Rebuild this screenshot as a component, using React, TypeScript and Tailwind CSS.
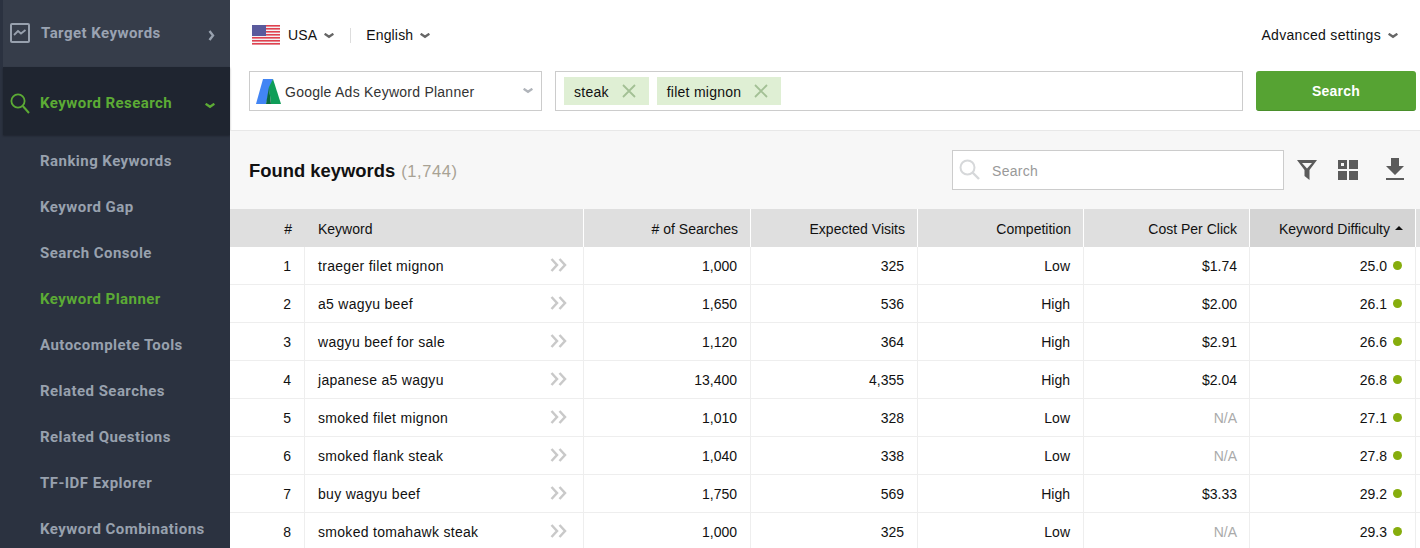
const subItems = [
  "Ranking Keywords",
  "Keyword Gap",
  "Search Console",
  "Keyword Planner",
  "Autocomplete Tools",
  "Related Searches",
  "Related Questions",
  "TF-IDF Explorer",
  "Keyword Combinations",
];

const rows = [
  ["1", "traeger filet mignon", "1,000", "325", "Low", "$1.74", "25.0"],
  ["2", "a5 wagyu beef", "1,650", "536", "High", "$2.00", "26.1"],
  ["3", "wagyu beef for sale", "1,120", "364", "High", "$2.91", "26.6"],
  ["4", "japanese a5 wagyu", "13,400", "4,355", "High", "$2.04", "26.8"],
  ["5", "smoked filet mignon", "1,010", "328", "Low", "N/A", "27.1"],
  ["6", "smoked flank steak", "1,040", "338", "Low", "N/A", "27.8"],
  ["7", "buy wagyu beef", "1,750", "569", "High", "$3.33", "29.2"],
  ["8", "smoked tomahawk steak", "1,000", "325", "Low", "N/A", "29.3"],
];

const cols = "grid grid-cols-[74px_279px_167px_167px_166px_166px_166px_5px]";

function Caret({ className }: { className?: string }) {
  return (
    <svg width="10" height="6" viewBox="0 0 10 6" className={className}>
      <path d="M0.6 0.8 L5 3.8 L9.4 0.8" fill="none" stroke="currentColor" strokeWidth="2.4" />
    </svg>
  );
}

function Flag() {
  return (
    <svg width="28" height="20" viewBox="0 0 28 20" className="mb-[2px]">
      <rect width="28" height="20" fill="#f3f1f4" />
      {[0, 3, 6, 9, 12, 15, 18].map((y) => (
        <rect key={y} y={y} width="28" height="1.6" fill="#e0414f" />
      ))}
      <rect width="14" height="11" fill="#5a5a9c" />
    </svg>
  );
}

function AdsLogo() {
  return (
    <svg width="25" height="25" viewBox="0 0 25 25">
      <path d="M7 0 H17 L10 25 H0 Z" fill="#4285f4" />
      <path d="M13 8 L17 0 L25 25 H15 Z" fill="#0f9d58" />
      <path d="M13 8 L15 25 H10 Z" fill="#0b6b3d" />
    </svg>
  );
}

function Tag({ label }: { label: string }) {
  return (
    <div className="flex h-7 items-center bg-[#dfefd4] pl-[10px] pr-[13px] text-[14px] tracking-[0.25px] text-[#111]">
      <span className="pt-[2px]">{label}</span>
      <svg width="14" height="14" viewBox="0 0 14 14" className="ml-[13px]">
        <path d="M1 1 L13 13 M13 1 L1 13" stroke="#a3c095" strokeWidth="1.8" />
      </svg>
    </div>
  );
}

export default function App() {
  return (
    <div className="flex h-[548px] w-[1420px] overflow-hidden bg-white font-['Liberation_Sans',Arial,sans-serif] text-[14px] text-[#111]">
      <aside className="w-[230px] shrink-0 bg-[#2b3240] pl-[3px] font-['Roboto',sans-serif] text-[15px] font-bold tracking-[0.45px]">
        <div className="flex h-[67px] items-center bg-[#363d4a] pl-[7px] pr-[15px] text-[#9aa3b2]">
          <svg width="20" height="20" viewBox="0 0 20 20" className="mb-[2px]">
            <rect x="1" y="1" width="18" height="18" rx="1" fill="none" stroke="#98a1ae" strokeWidth="2" />
            <path d="M4 12 L8 8 L11 10.5 L15.5 7" fill="none" stroke="#98a1ae" strokeWidth="1.8" />
          </svg>
          <span className="ml-[11px] flex-1">Target Keywords</span>
          <svg width="7" height="11" viewBox="0 0 7 11" className="mt-[3px]">
            <path d="M1.5 1 L5 5.5 L1.5 10" fill="none" stroke="#98a1ae" strokeWidth="2.4" />
          </svg>
        </div>
        <div className="flex h-[68px] items-center bg-[#1f2530] pl-[7px] pr-[15px] pt-[4px] text-[#5cab35] shadow-[0_1px_2px_rgba(0,0,0,0.3)]">
          <svg width="20" height="21" viewBox="0 0 20 21">
            <circle cx="8" cy="8" r="6.6" fill="none" stroke="#5cab35" strokeWidth="1.8" />
            <path d="M12.8 13 L19 20" stroke="#5cab35" strokeWidth="2" />
          </svg>
          <span className="ml-[10px] flex-1">Keyword Research</span>
          <Caret className="mt-[5px]" />
        </div>
        <nav className="flex flex-col pl-[37px] pt-[3px]">
          {subItems.map((item) => (
            <a key={item} className={item === "Keyword Planner" ? "flex h-[46px] items-center text-[#5cab35]" : "flex h-[46px] items-center text-[#98a1ae]"}>
              {item}
            </a>
          ))}
        </nav>
      </aside>

      <main className="flex min-w-0 flex-1 flex-col">
        <div className="h-[131px] shrink-0 border-b border-[#e8e8e8] pl-[19px] pr-1">
          <div className="flex h-[71px] items-center pl-[3px] pr-[18px] tracking-[0.15px]">
            <Flag />
            <span className="ml-2">USA</span>
            <Caret className="ml-[7px] text-[#666]" />
            <div className="ml-4 h-[15px] w-px bg-[#ddd]" />
            <span className="ml-[15px]">English</span>
            <Caret className="ml-[7px] text-[#666]" />
            <span className="ml-auto tracking-[0.3px]">Advanced settings</span>
            <Caret className="ml-[7px] text-[#666]" />
          </div>
          <div className="flex h-10 items-stretch">
            <div className="flex w-[293px] items-center border border-[#ccc] pl-[6px] pr-[8px] text-[#333]">
              <AdsLogo />
              <span className="ml-1 flex-1 pt-[2px] tracking-[0.25px]">Google Ads Keyword Planner</span>
              <Caret className="text-[#b0b4ba]" />
            </div>
            <div className="ml-[13px] flex w-[688px] items-center gap-2 border border-[#ccc] pl-2">
              <Tag label="steak" />
              <Tag label="filet mignon" />
            </div>
            <button className="ml-[13px] w-40 rounded-[3px] border-b border-[#4a8f2b] bg-[#56a333] pt-[2px] text-[14px] font-bold tracking-[0.2px] text-white">
              Search
            </button>
          </div>
        </div>

        <div className="flex h-[78px] shrink-0 items-center bg-[#f7f7f7] pl-[19px] pr-[15px]">
          <h2 className="pt-[2px] text-[18.4px] font-bold text-[#111]">
            Found keywords <span className="ml-[1px] text-[16.5px] font-normal tracking-[0.6px] text-[#a8a294]">(1,744)</span>
          </h2>
          <div className="ml-auto flex h-10 w-[332px] items-center border border-[#ccc] bg-white pl-[6px] text-[#999]">
            <svg width="21" height="21" viewBox="0 0 21 21" className="mb-[2px]">
              <circle cx="8.5" cy="8.5" r="7" fill="none" stroke="#d6d8da" strokeWidth="2" />
              <path d="M13.5 13.5 L20 20" stroke="#d6d8da" strokeWidth="2.4" />
            </svg>
            <span className="ml-[12px] pt-[2px] tracking-[0.3px]">Search</span>
          </div>
          <svg width="20" height="20" viewBox="0 0 20 20" className="ml-[13px]">
            <path fillRule="evenodd" d="M0 0 H20 L12.5 10 V20 L7.5 16 V10 Z M5 3 H15 L10 8.5 Z" fill="#5b5b5b" />
          </svg>
          <svg width="20" height="20" viewBox="0 0 20 20" className="ml-[21px]">
            <path fillRule="evenodd" d="M0 0 H9 V9 H0 Z M3 3 V6 H6 V3 Z M11 0 H20 V9 H11 Z M0 11 H9 V20 H0 Z M11 11 H20 V20 H11 Z" fill="#5b5b5b" />
          </svg>
          <svg width="20" height="24" viewBox="0 0 20 24" className="ml-[27px]">
            <path d="M6 0 H14 V8 H19 L10 17 L1 8 H6 Z M1 20 H19 V22 H1 Z" fill="#5b5b5b" />
          </svg>
        </div>

        <div className={`${cols} h-[38px] shrink-0 bg-[#dfdfdf] pt-[2px]`}>
          <div className="flex items-center justify-end pr-[12px]">#</div>
          <div className="flex items-center pl-[14px]">Keyword</div>
          {["# of Searches", "Expected Visits", "Competition", "Cost Per Click"].map((h) => (
            <div key={h} className="-mt-[2px] flex items-center justify-end border-l border-white pr-3 pt-[2px]">{h}</div>
          ))}
          <div className="-mt-[2px] flex items-center justify-end border-l border-white bg-[#d4d4d4] pr-[12px] pt-[2px]">
            Keyword Difficulty
            <span className="ml-[5px] mb-[2px] h-0 w-0 border-x-[4px] border-b-[4px] border-x-transparent border-b-[#111]" />
          </div>
          <div className="-mt-[2px] border-l border-white" />
        </div>

        {rows.map((r) => (
          <div key={r[0]} className={`${cols} h-[38px] shrink-0 border-b border-[#eee]`}>
            <div className="flex items-center justify-end pr-[13px] pt-[2px]">{r[0]}</div>
            <div className="flex items-center border-l border-[#eee] pl-[13px] pr-[16px] pt-[2px]">
              <span className="flex-1 tracking-[0.3px]">{r[1]}</span>
              <svg width="17" height="14" viewBox="0 0 17 14" className="mb-[4px]">
                <path d="M1.5 1 L7 7 L1.5 13 M9.5 1 L15 7 L9.5 13" fill="none" stroke="#c9c9c9" strokeWidth="2.5" />
              </svg>
            </div>
            <div className="flex items-center justify-end border-l border-[#eee] pr-[13px] pt-[2px]">{r[2]}</div>
            <div className="flex items-center justify-end border-l border-[#eee] pr-[13px] pt-[2px]">{r[3]}</div>
            <div className="flex items-center justify-end border-l border-[#eee] pr-[13px] pt-[2px]">{r[4]}</div>
            <div className={r[5] === "N/A" ? "flex items-center justify-end border-l border-[#eee] pr-[12px] pt-[2px] text-[#aaa]" : "flex items-center justify-end border-l border-[#eee] pr-[12px] pt-[2px]"}>{r[5]}</div>
            <div className="flex items-center justify-end border-l border-[#eee] pr-[13px] pt-[2px]">
              {r[6]}
              <span className="ml-[6px] mb-[3px] h-[9px] w-[9px] rounded-full bg-[#86ad0d]" />
            </div>
            <div className="border-l border-[#eee]" />
          </div>
        ))}
      </main>
    </div>
  );
}
